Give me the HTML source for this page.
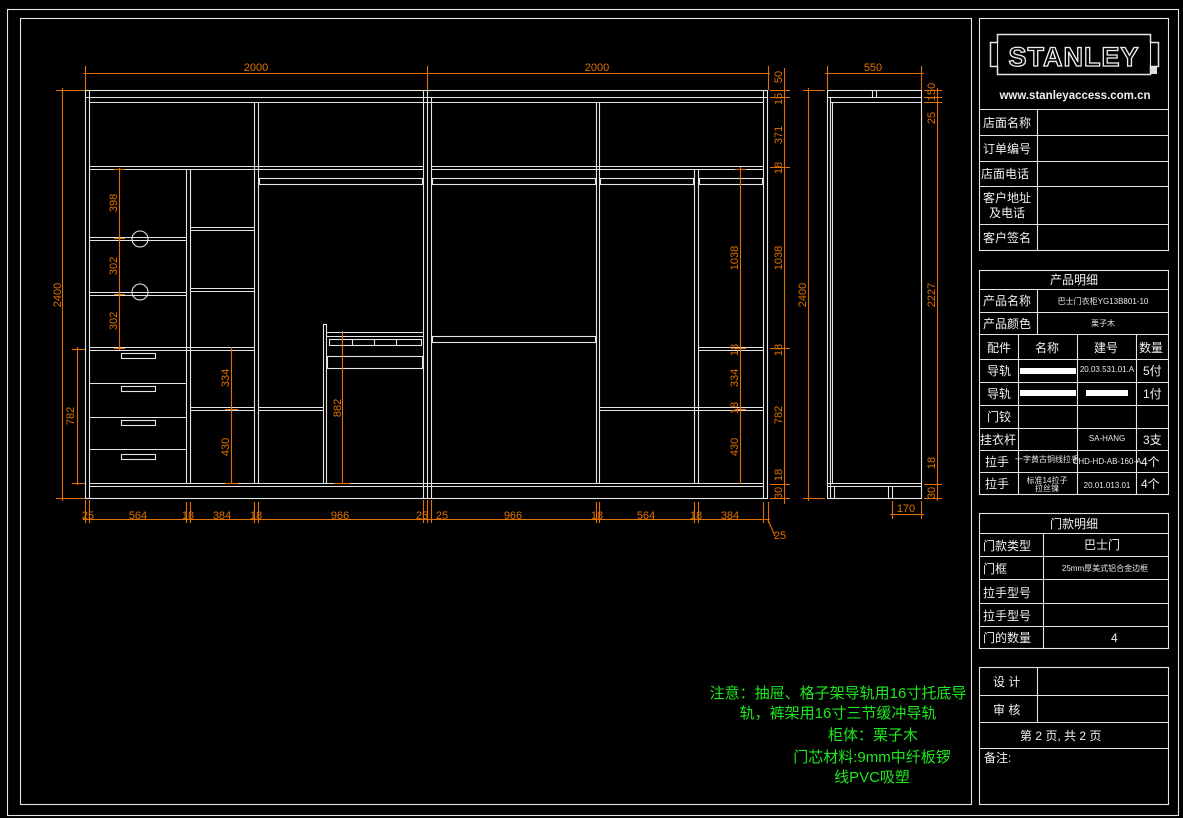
<!DOCTYPE html>
<html><head><meta charset="utf-8"><style>
html,body{margin:0;padding:0;background:#000;width:1183px;height:818px;overflow:hidden}
svg{display:block}
.w{stroke:#e4e4e4;stroke-width:1.1;fill:none}
.d{stroke:#e07000;stroke-width:1.1;fill:none}
.dt{fill:#e07000;font-family:"Liberation Sans",sans-serif;font-size:11px;text-anchor:middle}
.t{fill:#f0f0f0;font-family:"Liberation Sans","Noto Sans CJK SC",sans-serif;font-size:12px}
.s{fill:#e8e8e8;font-family:"Liberation Sans","Noto Sans CJK SC",sans-serif;font-size:8px;text-anchor:middle}
.g{fill:#1ee81e;font-family:"Liberation Sans","Noto Sans CJK SC",sans-serif;font-size:15px;text-anchor:middle}
</style></head><body>
<svg width="1183" height="818" viewBox="0 0 1183 818" xmlns="http://www.w3.org/2000/svg">
<!-- frames -->
<rect class="w" x="7.5" y="9.5" width="1171" height="806"/>
<rect class="w" x="20.5" y="18.5" width="951" height="786"/>

<!-- LEFT CABINET -->
<g class="w">
<rect x="85.5" y="90.5" width="682" height="408"/>
<line x1="89.5" y1="90" x2="89.5" y2="499"/>
<line x1="85" y1="97.5" x2="768" y2="97.5"/>
<line x1="89" y1="102.5" x2="764" y2="102.5"/>
<line x1="89" y1="166.5" x2="423" y2="166.5"/><line x1="89" y1="169.5" x2="423" y2="169.5"/>
<line x1="254.5" y1="102" x2="254.5" y2="483"/><line x1="258.5" y1="102" x2="258.5" y2="483"/>
<line x1="186.5" y1="169" x2="186.5" y2="483"/><line x1="190.5" y1="169" x2="190.5" y2="483"/>
<line x1="89" y1="237.5" x2="186" y2="237.5"/><line x1="89" y1="240.5" x2="186" y2="240.5"/>
<line x1="89" y1="292.5" x2="186" y2="292.5"/><line x1="89" y1="295.5" x2="186" y2="295.5"/>
<line x1="89" y1="347.5" x2="254" y2="347.5"/><line x1="89" y1="350.5" x2="254" y2="350.5"/>
<line x1="89" y1="383.5" x2="186" y2="383.5"/><line x1="89" y1="417.5" x2="186" y2="417.5"/><line x1="89" y1="449.5" x2="186" y2="449.5"/>
<rect x="121.5" y="353.5" width="34" height="5"/><rect x="121.5" y="386.5" width="34" height="5"/>
<rect x="121.5" y="420.5" width="34" height="5"/><rect x="121.5" y="454.5" width="34" height="5"/>
<circle cx="140" cy="239" r="8"/><circle cx="140" cy="292" r="8"/>
<line x1="190" y1="227.5" x2="254" y2="227.5"/><line x1="190" y1="230.5" x2="254" y2="230.5"/>
<line x1="190" y1="288.5" x2="254" y2="288.5"/><line x1="190" y1="291.5" x2="254" y2="291.5"/>
<line x1="190" y1="407.5" x2="254" y2="407.5"/><line x1="190" y1="410.5" x2="254" y2="410.5"/>
<line x1="258" y1="166.5" x2="423" y2="166.5"/>
<rect x="259.5" y="178.5" width="163" height="6"/>
<line x1="258" y1="407.5" x2="323" y2="407.5"/><line x1="258" y1="410.5" x2="323" y2="410.5"/>
<rect x="323.5" y="324.5" width="3" height="159"/>
<line x1="327" y1="332.5" x2="423" y2="332.5"/><line x1="327" y1="336.5" x2="423" y2="336.5"/>
<rect x="329.5" y="339.5" width="92" height="6"/>
<line x1="352.5" y1="339" x2="352.5" y2="346"/><line x1="374.5" y1="339" x2="374.5" y2="346"/><line x1="396.5" y1="339" x2="396.5" y2="346"/>
<rect x="327.5" y="356.5" width="95" height="12"/>
<line x1="89" y1="483.5" x2="764" y2="483.5"/><line x1="89" y1="486.5" x2="764" y2="486.5"/>
<line x1="423.5" y1="90" x2="423.5" y2="499"/><line x1="427.5" y1="90" x2="427.5" y2="499"/><line x1="431.5" y1="97" x2="431.5" y2="499"/>
<line x1="431" y1="166.5" x2="764" y2="166.5"/><line x1="431" y1="169.5" x2="764" y2="169.5"/>
<line x1="596.5" y1="102" x2="596.5" y2="483"/><line x1="599.5" y1="102" x2="599.5" y2="483"/>
<line x1="694.5" y1="169" x2="694.5" y2="483"/><line x1="698.5" y1="169" x2="698.5" y2="483"/>
<line x1="763.5" y1="90" x2="763.5" y2="499"/>
<rect x="432.5" y="178.5" width="163" height="6"/>
<rect x="600.5" y="178.5" width="93" height="6"/>
<rect x="699.5" y="178.5" width="63" height="6"/>
<rect x="432.5" y="336.5" width="163" height="6"/>
<line x1="698" y1="347.5" x2="764" y2="347.5"/><line x1="698" y1="350.5" x2="764" y2="350.5"/>
<line x1="599" y1="407.5" x2="764" y2="407.5"/><line x1="599" y1="410.5" x2="764" y2="410.5"/>
</g>

<!-- SIDE VIEW -->
<g class="w">
<rect x="827.5" y="90.5" width="94" height="408"/>
<line x1="827" y1="97.5" x2="922" y2="97.5"/><line x1="830" y1="102.5" x2="922" y2="102.5"/>
<line x1="830.5" y1="97" x2="830.5" y2="499"/><line x1="832.5" y1="102" x2="832.5" y2="483"/>
<line x1="872.5" y1="90" x2="872.5" y2="97"/><line x1="876.5" y1="90" x2="876.5" y2="97"/>
<line x1="827" y1="483.5" x2="922" y2="483.5"/><line x1="827" y1="486.5" x2="922" y2="486.5"/>
<line x1="834.5" y1="486" x2="834.5" y2="499"/><line x1="888.5" y1="486" x2="888.5" y2="499"/><line x1="892.5" y1="486" x2="892.5" y2="499"/>
</g>

<!-- DIMENSIONS -->
<g class="d">
<line x1="83" y1="73.5" x2="770" y2="73.5"/>
<line x1="85.5" y1="66" x2="85.5" y2="90"/><line x1="427.5" y1="66" x2="427.5" y2="90"/><line x1="768.5" y1="66" x2="768.5" y2="90"/>
<line x1="62.5" y1="88" x2="62.5" y2="501"/><line x1="56" y1="90.5" x2="85" y2="90.5"/><line x1="56" y1="498.5" x2="85" y2="498.5"/>
<line x1="77.5" y1="347" x2="77.5" y2="485"/><line x1="72" y1="349.5" x2="85" y2="349.5"/><line x1="72" y1="483.5" x2="85" y2="483.5"/>
<line x1="119.5" y1="168" x2="119.5" y2="350"/>
<line x1="114" y1="169.5" x2="125" y2="169.5"/><line x1="114" y1="238.5" x2="125" y2="238.5"/><line x1="114" y1="294.5" x2="125" y2="294.5"/><line x1="114" y1="348.5" x2="125" y2="348.5"/>
<line x1="231.5" y1="347" x2="231.5" y2="484"/><line x1="225" y1="409.5" x2="238" y2="409.5"/><line x1="225" y1="483.5" x2="238" y2="483.5"/>
<line x1="342.5" y1="331" x2="342.5" y2="484"/><line x1="334" y1="483.5" x2="350" y2="483.5"/>
<line x1="740.5" y1="167" x2="740.5" y2="484"/>
<line x1="735" y1="169.5" x2="746" y2="169.5"/><line x1="735" y1="348.5" x2="746" y2="348.5"/><line x1="735" y1="409.5" x2="746" y2="409.5"/>
<line x1="784.5" y1="68" x2="784.5" y2="504"/>
<line x1="770" y1="90.5" x2="790" y2="90.5"/><line x1="770" y1="97.5" x2="790" y2="97.5"/><line x1="770" y1="167.5" x2="790" y2="167.5"/><line x1="770" y1="348.5" x2="790" y2="348.5"/><line x1="770" y1="484.5" x2="790" y2="484.5"/><line x1="770" y1="498.5" x2="790" y2="498.5"/>
<line x1="83" y1="519.5" x2="770" y2="519.5"/>
<line x1="85.5" y1="500" x2="85.5" y2="523"/><line x1="89.5" y1="500" x2="89.5" y2="523"/>
<line x1="186.5" y1="502" x2="186.5" y2="523"/><line x1="190.5" y1="502" x2="190.5" y2="523"/>
<line x1="254.5" y1="502" x2="254.5" y2="523"/><line x1="258.5" y1="502" x2="258.5" y2="523"/>
<line x1="423.5" y1="500" x2="423.5" y2="523"/><line x1="427.5" y1="500" x2="427.5" y2="523"/><line x1="431.5" y1="500" x2="431.5" y2="523"/>
<line x1="596.5" y1="502" x2="596.5" y2="523"/><line x1="599.5" y1="502" x2="599.5" y2="523"/>
<line x1="694.5" y1="502" x2="694.5" y2="523"/><line x1="698.5" y1="502" x2="698.5" y2="523"/>
<line x1="763.5" y1="502" x2="763.5" y2="523"/><line x1="768.5" y1="502" x2="768.5" y2="523"/>
<line x1="768" y1="520" x2="775" y2="536"/>
<line x1="825" y1="73.5" x2="924" y2="73.5"/><line x1="827.5" y1="66" x2="827.5" y2="90"/><line x1="921.5" y1="66" x2="921.5" y2="90"/>
<line x1="808.5" y1="88" x2="808.5" y2="501"/><line x1="803" y1="90.5" x2="825" y2="90.5"/><line x1="803" y1="498.5" x2="825" y2="498.5"/>
<line x1="937.5" y1="88" x2="937.5" y2="501"/>
<line x1="924" y1="90.5" x2="942" y2="90.5"/><line x1="924" y1="97.5" x2="942" y2="97.5"/><line x1="924" y1="102.5" x2="942" y2="102.5"/><line x1="924" y1="484.5" x2="942" y2="484.5"/><line x1="924" y1="498.5" x2="942" y2="498.5"/>
<line x1="890" y1="514.5" x2="924" y2="514.5"/><line x1="892.5" y1="501" x2="892.5" y2="519"/><line x1="921.5" y1="501" x2="921.5" y2="519"/>
</g>
<g class="dt">
<text x="256" y="71">2000</text><text x="597" y="71">2000</text><text x="873" y="71">550</text>
<text x="88" y="519">25</text><text x="138" y="519">564</text><text x="188" y="519">18</text><text x="222" y="519">384</text><text x="256" y="519">18</text><text x="340" y="519">966</text><text x="422" y="519">25</text>
<text x="442" y="519">25</text><text x="513" y="519">966</text><text x="597" y="519">18</text><text x="646" y="519">564</text><text x="696" y="519">18</text><text x="730" y="519">384</text>
<text x="780" y="539">25</text><text x="906" y="512">170</text>
<g text-anchor="middle">
<text transform="translate(61,295) rotate(-90)">2400</text>
<text transform="translate(74,416) rotate(-90)">782</text>
<text transform="translate(117,203) rotate(-90)">398</text>
<text transform="translate(117,266) rotate(-90)">302</text>
<text transform="translate(117,321) rotate(-90)">302</text>
<text transform="translate(229,378) rotate(-90)">334</text>
<text transform="translate(229,447) rotate(-90)">430</text>
<text transform="translate(341,408) rotate(-90)">882</text>
<text transform="translate(738,258) rotate(-90)">1038</text>
<text transform="translate(738,350) rotate(-90)">18</text>
<text transform="translate(738,378) rotate(-90)">334</text>
<text transform="translate(738,408) rotate(-90)">18</text>
<text transform="translate(738,447) rotate(-90)">430</text>
<text transform="translate(782,77) rotate(-90)">50</text>
<text transform="translate(782,99) rotate(-90)">15</text>
<text transform="translate(782,135) rotate(-90)">371</text>
<text transform="translate(782,168) rotate(-90)">18</text>
<text transform="translate(782,258) rotate(-90)">1038</text>
<text transform="translate(782,350) rotate(-90)">18</text>
<text transform="translate(782,415) rotate(-90)">782</text>
<text transform="translate(782,475) rotate(-90)">18</text>
<text transform="translate(782,493) rotate(-90)">30</text>
<text transform="translate(806,295) rotate(-90)">2400</text>
<text transform="translate(935,92) rotate(-90)">150</text>
<text transform="translate(935,118) rotate(-90)">25</text>
<text transform="translate(935,295) rotate(-90)">2227</text>
<text transform="translate(935,463) rotate(-90)">18</text>
<text transform="translate(935,493) rotate(-90)">30</text>
</g></g>

<!-- GREEN NOTES -->
<text class="g" x="838" y="698">注意：抽屉、格子架导轨用16寸托底导</text>
<text class="g" x="838" y="718">轨，裤架用16寸三节缓冲导轨</text>
<text class="g" x="873" y="740">柜体：栗子木</text>
<text class="g" x="872" y="762">门芯材料:9mm中纤板锣</text>
<text class="g" x="872" y="782">线PVC吸塑</text>

<!-- RIGHT PANEL TABLE 1 -->
<g class="w">
<rect x="979.5" y="18.5" width="189" height="232"/>
<line x1="979" y1="109.5" x2="1169" y2="109.5"/><line x1="979" y1="135.5" x2="1169" y2="135.5"/><line x1="979" y1="161.5" x2="1169" y2="161.5"/><line x1="979" y1="186.5" x2="1169" y2="186.5"/><line x1="979" y1="224.5" x2="1169" y2="224.5"/>
<line x1="1037.5" y1="109" x2="1037.5" y2="250"/>
<path d="M997.5 34.5 H1150.5 V42.5 H1158.5 V66.5 H1150.5 V74.5 H997.5 V66.5 H990.5 V42.5 H997.5 Z" stroke-width="1.5"/>
<line x1="997.5" y1="42" x2="997.5" y2="67"/><line x1="1150.5" y1="42" x2="1150.5" y2="67"/>
</g>
<text x="1074" y="66" font-family="Liberation Sans,sans-serif" font-weight="bold" font-size="27" fill="none" stroke="#eee" stroke-width="1.3" text-anchor="middle" letter-spacing="1">STANLEY</text>
<rect x="1151" y="67" width="6" height="7" fill="#ddd"/>
<text x="1075" y="99" font-family="Liberation Sans,sans-serif" font-weight="bold" font-size="11.5" fill="#eee" text-anchor="middle">www.stanleyaccess.com.cn</text>
<g class="t">
<text x="983" y="127">店面名称</text><text x="983" y="153">订单编号</text><text x="981" y="178">店面电话</text>
<text x="983" y="202">客户地址</text><text x="989" y="217">及电话</text><text x="983" y="242">客户签名</text>
</g>

<!-- TABLE 2 -->
<g class="w">
<rect x="979.5" y="270.5" width="189" height="224"/>
<line x1="979" y1="289.5" x2="1169" y2="289.5"/><line x1="979" y1="312.5" x2="1169" y2="312.5"/><line x1="979" y1="334.5" x2="1169" y2="334.5"/><line x1="979" y1="359.5" x2="1169" y2="359.5"/><line x1="979" y1="382.5" x2="1169" y2="382.5"/><line x1="979" y1="405.5" x2="1169" y2="405.5"/><line x1="979" y1="428.5" x2="1169" y2="428.5"/><line x1="979" y1="450.5" x2="1169" y2="450.5"/><line x1="979" y1="472.5" x2="1169" y2="472.5"/>
<line x1="1037.5" y1="289" x2="1037.5" y2="334"/>
<line x1="1018.5" y1="334" x2="1018.5" y2="495"/><line x1="1077.5" y1="334" x2="1077.5" y2="495"/><line x1="1136.5" y1="334" x2="1136.5" y2="495"/>
</g>
<rect x="1020" y="368" width="56" height="6" fill="#fff"/><rect x="1020" y="390" width="56" height="6" fill="#fff"/><rect x="1086" y="390" width="42" height="6" fill="#fff"/>
<g class="t">
<text x="1050" y="284">产品明细</text>
<text x="983" y="305">产品名称</text><text x="983" y="328">产品颜色</text>
<text x="987" y="352">配件</text><text x="1035" y="352">名称</text><text x="1094" y="352">建号</text><text x="1139" y="352">数量</text>
<text x="987" y="375">导轨</text><text x="1143" y="375">5付</text>
<text x="987" y="398">导轨</text><text x="1143" y="398">1付</text>
<text x="987" y="421">门铰</text>
<text x="980" y="444">挂衣杆</text><text x="1143" y="444">3支</text>
<text x="985" y="466">拉手</text><text x="1141" y="466">4个</text>
<text x="985" y="488">拉手</text><text x="1141" y="488">4个</text>
</g>
<g class="s">
<text x="1103" y="304">巴士门衣柜YG13B801-10</text><text x="1103" y="326">栗子木</text>
<text x="1107" y="372">20.03.531.01.A</text><text x="1107" y="441">SA-HANG</text>
<text x="1047" y="462">一字黄古铜线拉手</text><text x="1107" y="464">CHD-HD-AB-160-A</text>
<text x="1047" y="483">标准14拉子</text><text x="1047" y="491">拉丝镍</text><text x="1107" y="488">20.01.013.01</text>
</g>

<!-- TABLE 3 -->
<g class="w">
<rect x="979.5" y="513.5" width="189" height="135"/>
<line x1="979" y1="533.5" x2="1169" y2="533.5"/><line x1="979" y1="556.5" x2="1169" y2="556.5"/><line x1="979" y1="579.5" x2="1169" y2="579.5"/><line x1="979" y1="603.5" x2="1169" y2="603.5"/><line x1="979" y1="626.5" x2="1169" y2="626.5"/>
<line x1="1043.5" y1="533" x2="1043.5" y2="649"/>
</g>
<g class="t">
<text x="1050" y="528">门款明细</text>
<text x="983" y="550">门款类型</text><text x="983" y="573">门框</text><text x="983" y="597">拉手型号</text><text x="983" y="620">拉手型号</text><text x="983" y="642">门的数量</text>
<text x="1084" y="549">巴士门</text><text x="1111" y="642">4</text>
</g>
<text class="s" x="1105" y="571">25mm厚美式铝合金边框</text>

<!-- TABLE 4 -->
<g class="w">
<rect x="979.5" y="667.5" width="189" height="137"/>
<line x1="979" y1="695.5" x2="1169" y2="695.5"/><line x1="979" y1="722.5" x2="1169" y2="722.5"/><line x1="979" y1="748.5" x2="1169" y2="748.5"/>
<line x1="1037.5" y1="667" x2="1037.5" y2="722"/>
</g>
<g class="t">
<text x="993" y="686">设 计</text><text x="993" y="714">审 核</text>
<text x="1020" y="740">第 2 页, 共 2 页</text><text x="984" y="762">备注:</text>
</g>
</svg>
</body></html>
